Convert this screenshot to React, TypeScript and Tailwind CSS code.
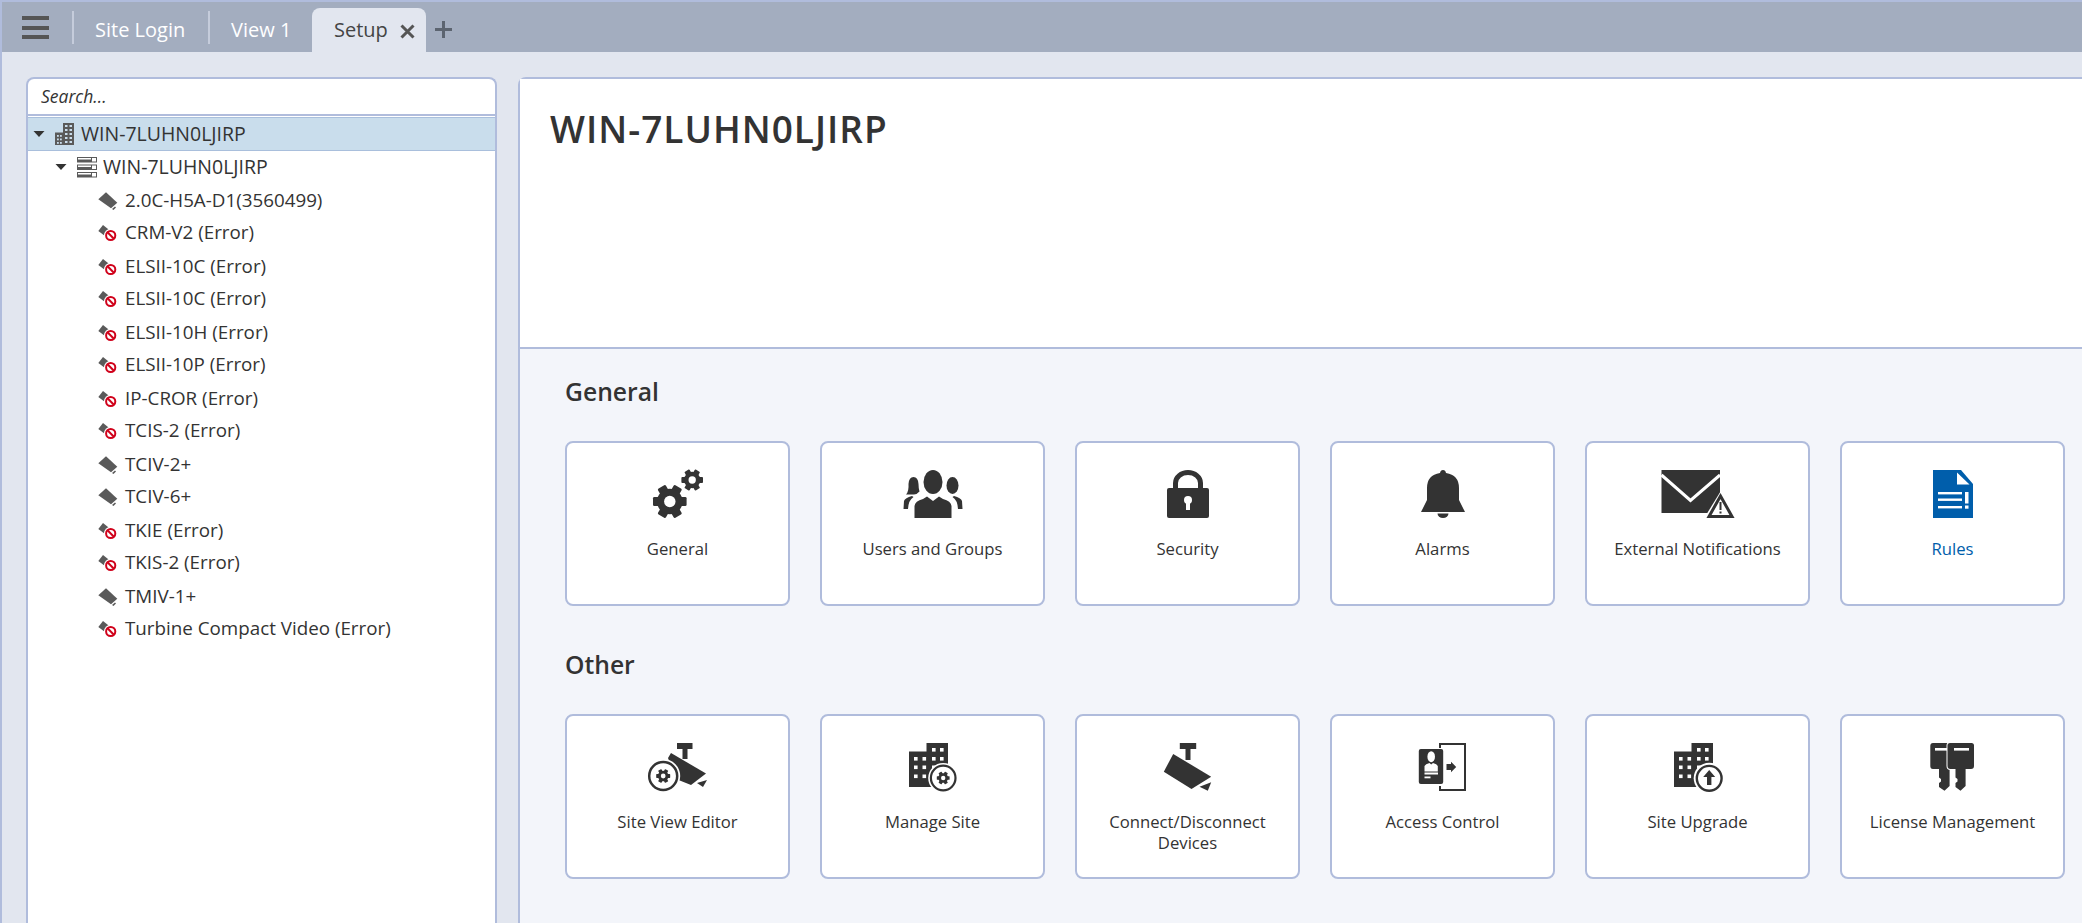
import type { ReactNode } from 'react'

const font = { fontFamily: '"Open Sans", sans-serif' }

const devices = [
  { name: '2.0C-H5A-D1(3560499)', error: false },
  { name: 'CRM-V2 (Error)', error: true },
  { name: 'ELSII-10C (Error)', error: true },
  { name: 'ELSII-10C (Error)', error: true },
  { name: 'ELSII-10H (Error)', error: true },
  { name: 'ELSII-10P (Error)', error: true },
  { name: 'IP-CROR (Error)', error: true },
  { name: 'TCIS-2 (Error)', error: true },
  { name: 'TCIV-2+', error: false },
  { name: 'TCIV-6+', error: false },
  { name: 'TKIE (Error)', error: true },
  { name: 'TKIS-2 (Error)', error: true },
  { name: 'TMIV-1+', error: false },
  { name: 'Turbine Compact Video (Error)', error: true },
]

const Gear = ({ x, y, r, fill = '#333' }: { x: number; y: number; r: number; fill?: string }) => (
  <g transform={`translate(${x} ${y})`} fill={fill}>
    {[0, 60, 120].map((a) => (
      <rect key={a} x={-r} y={-r * 0.27} width={r * 2} height={r * 0.54} rx={r * 0.08} transform={`rotate(${a})`} />
    ))}
    <circle r={r * 0.76} />
    <circle r={r * 0.34} fill="#fff" />
  </g>
)

const Building = ({ children }: { children: ReactNode }) => (
  <>
    <path d="M16 8.500h17.500V0H55v44H16z" fill="#333" />
    {[
      [39, 5],
      [47, 5],
      [21, 14],
      [29.5, 14],
      [39, 14],
      [47, 14],
      [21, 22.5],
      [29.5, 22.5],
      [39, 22.5],
      [21, 31.5],
      [29.5, 31.5],
    ].map(([x, y]) => (
      <rect key={`${x}-${y}`} x={x} y={y} width="3.600" height="3.600" fill="#fff" />
    ))}
    {children}
  </>
)

const icons: Record<string, ReactNode> = {
  General: (
    <>
      <Gear x={31.8} y={31.5} r={16.8} />
      <Gear x={54.2} y={10} r={10.8} />
    </>
  ),
  'Users and Groups': (
    <>
      <ellipse cx="40" cy="12" rx="9.500" ry="12" fill="#333" />
      <path d="M21.500 48V36q.5-5 8.500-7l4-2.500 6 4.500 6-4.500 4 2.500q8 2 8.500 7v12z" fill="#333" />
      <path d="M13 24.500q3-3 2.500-10.500.5-7 5-7t5 7q0 4 1 7.500l-3 2.500-2.500.5z" fill="#333" />
      <path d="M10.500 39l.5-8q1-3 8-5l1.500 1q-5 3-5.500 12z" fill="#333" />
      <ellipse cx="59.500" cy="15.500" rx="6" ry="8.500" fill="#333" />
      <path d="M69.500 39l-.5-8q-1-3-8-5l-1.500 1q5 3 5.500 12z" fill="#333" />
    </>
  ),
  Security: (
    <>
      <path d="M27.500 20v-7a12.500 10.500 0 0 1 25 0v7" fill="none" stroke="#333" strokeWidth="5" />
      <rect x="19" y="18" width="42" height="30" rx="2" fill="#333" />
      <circle cx="40" cy="30" r="4" fill="#fff" />
      <rect x="38" y="31" width="4" height="9" fill="#fff" />
    </>
  ),
  Alarms: (
    <>
      <path d="M18 42l6-12V18q0-13 13-15 .5-3 3-3t3 3q13 2 13 15v12l6 12z" fill="#333" />
      <path d="M34.500 43.500h11a5.500 4.500 0 0 1-11 0z" fill="#333" />
    </>
  ),
  'External Notifications': (
    <>
      <path d="M3.500 0H62v43H3.500z" fill="#333" />
      <path d="M3.500 5l29 25.500L62 5" fill="none" stroke="#fff" strokeWidth="3" />
      <path d="M62.500 21.500L80 50H45z" fill="#fff" />
      <path d="M62.500 26L74 46.500H51z" fill="#fff" stroke="#333" strokeWidth="3" />
      <rect x="61.500" y="32" width="2" height="8" fill="#333" />
      <rect x="61.500" y="41.500" width="2" height="2" fill="#333" />
    </>
  ),
  Rules: (
    <>
      <path d="M20 0h28l12 14v34H20z" fill="#005eab" />
      <path d="M44 2.500V14.500H56.500z" fill="#fff" />
      <rect x="25" y="22" width="24" height="2.400" fill="#fff" />
      <rect x="25" y="28.500" width="24" height="2.400" fill="#fff" />
      <rect x="25" y="36" width="24" height="2.400" fill="#fff" />
      <rect x="52" y="22" width="3.500" height="11.500" fill="#fff" />
      <rect x="52" y="35.500" width="3.500" height="3.200" fill="#fff" />
    </>
  ),
  'Site View Editor': (
    <>
      <path d="M39 0h15.500v6h-5v10h-5V6H39z" fill="#333" />
      <path d="M30 15l3-5 35 20.500L53 42l-15-6z" fill="#333" />
      <path d="M59 40l10-3-4 7z" fill="#333" />
      <circle cx="25.200" cy="33" r="17" fill="#fff" />
      <circle cx="25.200" cy="33" r="14" fill="#fff" stroke="#333" strokeWidth="2.500" />
      <Gear x={25.2} y={33} r={7} />
    </>
  ),
  'Manage Site': (
    <Building>
      <circle cx="50.200" cy="35" r="15" fill="#fff" />
      <circle cx="50.200" cy="35" r="12.300" fill="#fff" stroke="#333" strokeWidth="2.200" />
      <Gear x={50.2} y={35} r={6.4} />
    </Building>
  ),
  'Connect/Disconnect Devices': (
    <>
      <path d="M31.800 0h16.400v6h-5.700v11h-5V6h-5.700z" fill="#333" />
      <path d="M25.200 11l38 22.700L43.500 46 15.800 28.700z" fill="#333" />
      <path d="M51.500 43.700l11.700-4.400-3.400 8.400z" fill="#333" />
    </>
  ),
  'Access Control': (
    <>
      <path d="M37 5V1h25v46H37v-4" fill="none" stroke="#333" strokeWidth="2" />
      <rect x="15.800" y="6" width="24.400" height="35" rx="2" fill="#333" />
      <ellipse cx="28.200" cy="13.700" rx="3.800" ry="5.500" fill="#fff" />
      <path d="M21.500 28.500V23q1-2 5-3l1.700 1.500L30 20q4 1 4.800 3v5.500z" fill="#fff" />
      <rect x="21.500" y="29.500" width="13.500" height="2" fill="#fff" />
      <rect x="21.500" y="33.500" width="6" height="1.800" fill="#fff" />
      <path d="M43.500 21H48v-2.300l5.200 5.300-5.200 5.300V27h-4.500z" fill="#333" />
    </>
  ),
  'Site Upgrade': (
    <Building>
      <circle cx="51.200" cy="35.300" r="15.500" fill="#fff" />
      <circle cx="51.200" cy="35.300" r="12.400" fill="#fff" stroke="#333" strokeWidth="2.400" />
      <path d="M51.200 27l6 7h-3.800v8h-4.400v-8h-3.800z" fill="#333" />
    </Building>
  ),
  'License Management': (
    <>
      <path d="M20 0h17v26h-.4v17l-5.100 4.700-5.500-3.700v-4l2-1.500V36l-2-1.500V26h-6q-2.700 0-2.700-3V3q0-3 2.700-3z" fill="#333" />
      <rect x="22" y="5" width="12" height="2.600" fill="#fff" />
      <path
        d="M37 0h21.500q2.500 0 2.500 2.500V23q0 3-3 3h-5.400v17l-5.100 4.700-5-3.700v-4l2-1.500V36l-2-1.500V26h-5q-3 0-3-3V2.500Q34.500 0 37 0z"
        fill="#333"
        stroke="#fff"
        strokeWidth="2"
        paintOrder="stroke"
      />
      <rect x="41" y="5" width="15" height="2.600" fill="#fff" />
    </>
  ),
}

const generalItems = ['General', 'Users and Groups', 'Security', 'Alarms', 'External Notifications', 'Rules']
const otherItems = ['Site View Editor', 'Manage Site', 'Connect/Disconnect Devices', 'Access Control', 'Site Upgrade', 'License Management']

const Card = ({ label }: { label: string }) => (
  <div className="flex h-[165px] w-[225px] shrink-0 flex-col items-center rounded-lg border-2 border-[#b0bcdc] bg-white pt-[27px]">
    <svg width="80" height="48" viewBox="0 0 80 48" overflow="visible">
      {icons[label]}
    </svg>
    <div
      className={`mt-[20px] w-[180px] text-center text-[16.700px] leading-[21px] ${label === 'Rules' ? 'text-[#005eab]' : 'text-[#333]'}`}
    >
      {label}
    </div>
  </div>
)

const Section = ({ title, items }: { title: string; items: string[] }) => (
  <section>
    <h2 className="mb-[6px] flex h-[86px] items-center text-[24.700px] font-semibold text-[#333]">{title}</h2>
    <div className="flex gap-[30px]">
      {items.map((item) => (
        <Card key={item} label={item} />
      ))}
    </div>
  </section>
)

const Caret = () => (
  <svg width="14" height="8" viewBox="0 0 14 8" className="shrink-0">
    <path d="M1.500 1h11L7 7z" fill="#333" />
  </svg>
)

const DeviceIcon = ({ error }: { error: boolean }) => (
  <svg width="22" height="22" viewBox="0 0 22 22" className="shrink-0">
    {error ? (
      <>
        <path d="M1.300 9L6 3l7.500 6L8 14z" fill="#5a5a5a" />
        <circle cx="13.700" cy="13.500" r="6.800" fill="#fff" />
        <circle cx="13.700" cy="13.500" r="4.600" fill="#fff" stroke="#d0021b" strokeWidth="2" />
        <path d="M10.500 10.300l6.400 6.400" stroke="#d0021b" strokeWidth="2" />
      </>
    ) : (
      <>
        <path d="M1.300 9.300L9 2.300l11.300 10.400-6.300 5.600z" fill="#5a5a5a" />
        <path d="M15 19l3-2.500 1 1-2.500 2.500z" fill="#5a5a5a" />
      </>
    )}
  </svg>
)

const SiteIcon = () => (
  <svg width="22" height="22" viewBox="0 0 22 22" className="shrink-0">
    <path d="M1 9.500h8V0h11v22H1z" fill="#5a5a5a" />
    {[2, 6, 10, 14, 18].map((y) => (
      <g key={y} fill="#c9ddec">
        <rect x="11" y={y} width="2.500" height="2" />
        <rect x="15.500" y={y} width="2.500" height="2" />
      </g>
    ))}
    {[12, 15.5, 19].map((y) => (
      <g key={y} fill="#c9ddec">
        <rect x="3" y={y} width="1.800" height="1.800" />
        <rect x="6" y={y} width="1.800" height="1.800" />
      </g>
    ))}
  </svg>
)

const ServerIcon = () => (
  <svg width="22" height="22" viewBox="0 0 22 22" className="shrink-0">
    {[1, 8.5, 16].map((y) => (
      <g key={y}>
        <rect x="1" y={y} width="20" height="5.500" fill="#5a5a5a" />
        <rect x="2" y={y + 1} width="13" height="1.500" fill="#fff" />
        <rect x="16" y={y + 1} width="4" height="3.500" fill="#fff" />
      </g>
    ))}
  </svg>
)

const Tree = () => (
  <aside className="flex w-[471px] shrink-0 flex-col rounded-t-lg border-2 border-b-0 border-[#b0bcdc] bg-white">
    <div className="flex h-[37px] items-center border-b-2 border-[#b0bcdc] pl-[13px] text-[17.500px] italic text-[#333]">Search...</div>
    <div className="mt-px flex h-[34px] items-center border-y border-[#a9bfdc] bg-[#c9ddec] pl-[4px] text-[19.500px] text-[#333]">
      <Caret />
      <span className="ml-[8px]"><SiteIcon /></span>
      <span className="ml-[5px]">WIN-7LUHN0LJIRP</span>
    </div>
    <div className="flex h-[33px] items-center pb-[2px] pl-[26px] text-[19.500px] text-[#333]">
      <Caret />
      <span className="ml-[8px]"><ServerIcon /></span>
      <span className="ml-[5px]">WIN-7LUHN0LJIRP</span>
    </div>
    {devices.map((device, i) => (
      <div
        key={`${device.name}-${i}`}
        className={`flex h-[33px] items-center gap-[6px] pl-[69px] text-[18.800px] text-[#333] ${i % 2 ? 'pb-[2px]' : ''}`}
      >
        <DeviceIcon error={device.error} />
        {device.name}
      </div>
    ))}
  </aside>
)

export default function App() {
  return (
    <div className="flex h-screen flex-col overflow-hidden border-l-2 border-t-2 border-[#b0bcdc] bg-[#e2e6ef]" style={font}>
      <header className="flex h-[50px] shrink-0 items-end bg-[#a3adbf] text-[20px] text-white">
        <div className="mb-[13px] ml-[20px] flex h-[23px] w-[27px] flex-col justify-between">
          <span className="h-[4px] bg-[#555]" />
          <span className="h-[4px] bg-[#555]" />
          <span className="h-[4px] bg-[#555]" />
        </div>
        <span className="mb-[8px] ml-[23px] h-[33px] w-[2px] bg-[#c5ccdb]" />
        <span className="flex h-[44px] w-[134px] items-center pl-[21px]">Site Login</span>
        <span className="mb-[8px] h-[33px] w-[2px] bg-[#c5ccdb]" />
        <span className="flex h-[44px] w-[102px] items-center pl-[21px]">View 1</span>
        <div className="flex h-[44px] w-[114px] items-center rounded-t-lg bg-[#e2e6ef] pl-[22px] text-[#444]">
          <span className="w-[66px]">Setup</span>
          <svg width="15" height="15" viewBox="0 0 15 15" className="mt-[2px]">
            <path d="M1.500 1.500l12 12m0-12l-12 12" stroke="#555" strokeWidth="3" />
          </svg>
        </div>
        <svg width="17" height="17" viewBox="0 0 17 17" className="mb-[14px] ml-[9px]">
          <path d="M8.500 0v17M0 8.500h17" stroke="#5c6470" strokeWidth="3" />
        </svg>
      </header>
      <main className="flex flex-1 items-stretch gap-[21px] overflow-hidden pl-[24px] pt-[25px]">
        <Tree />
        <div className="flex flex-1 flex-col rounded-tl-lg border-l-2 border-t-2 border-[#b0bcdc] bg-[#f3f5fa]">
          <div className="h-[270px] shrink-0 border-b-2 border-[#b0bcdc] bg-white pl-[30px] pt-[22px] text-[37px] font-semibold leading-[56px] tracking-[1px] text-[#333]">
            WIN-7LUHN0LJIRP
          </div>
          <div className="pl-[45px]">
            <Section title="General" items={generalItems} />
            <div className="mt-[16px]">
              <Section title="Other" items={otherItems} />
            </div>
          </div>
        </div>
      </main>
    </div>
  )
}
